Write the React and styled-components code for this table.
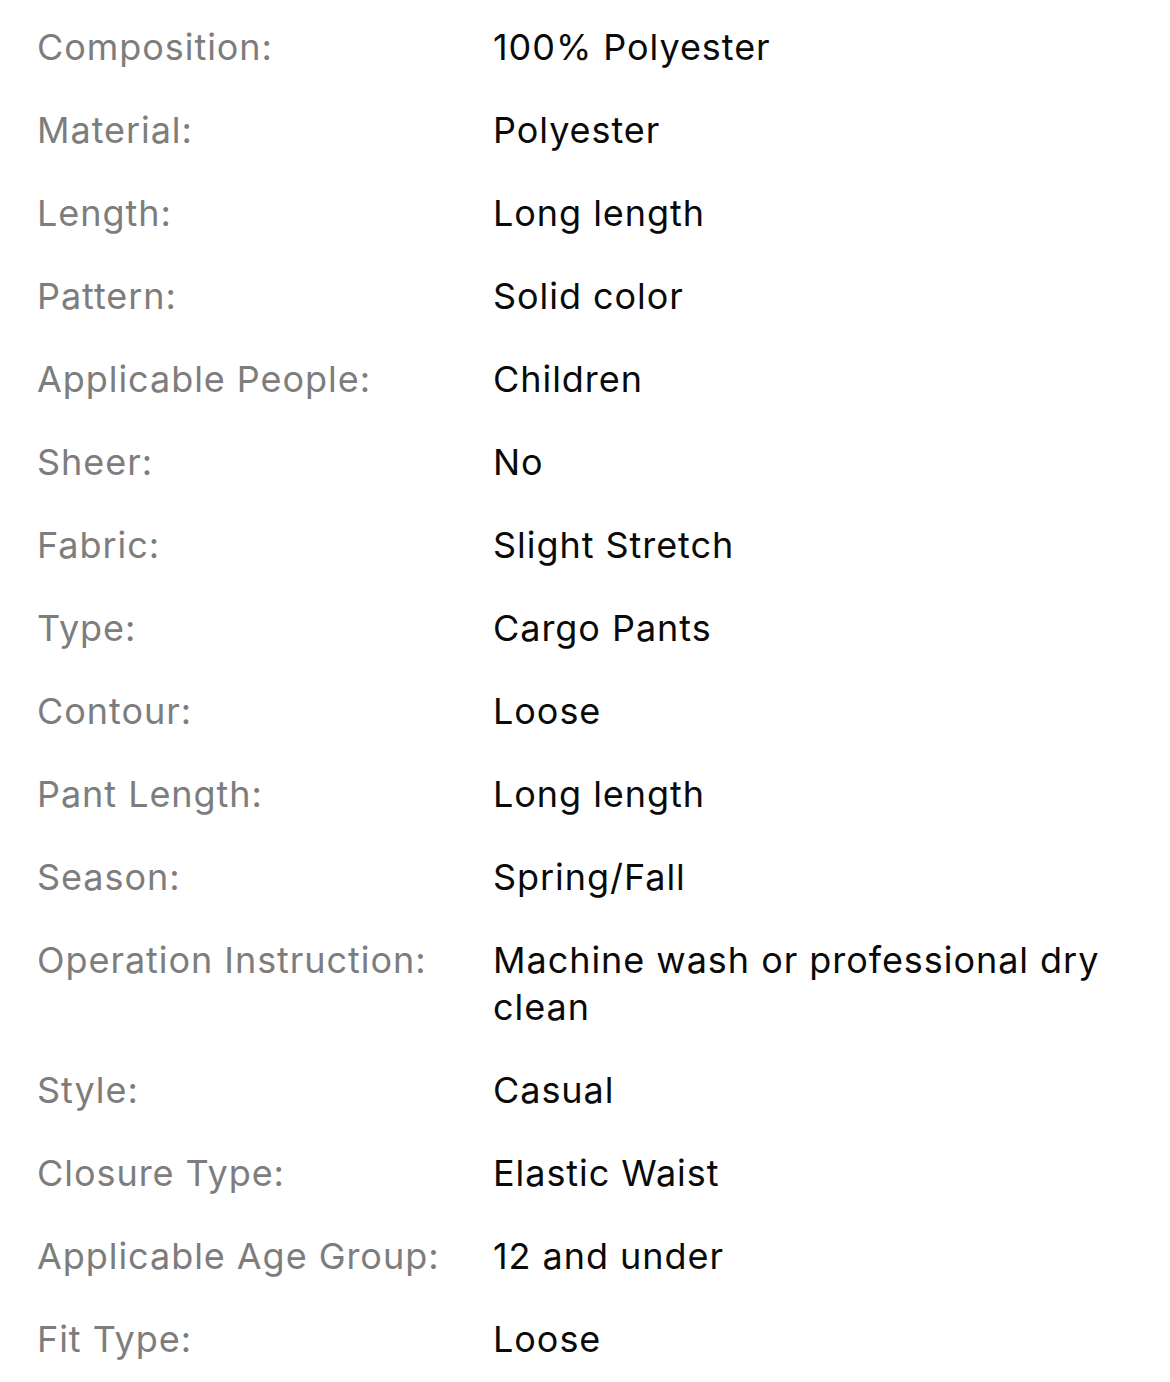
import React from "react";
import styled, { createGlobalStyle } from "styled-components";

const Global = createGlobalStyle`
  html, body { margin: 0; padding: 0; background: #fff; }
  body { font-family: Inter, "Noto Sans", "Liberation Sans", sans-serif; -webkit-font-smoothing: antialiased; }
`;

const Sheet = styled.div`
  padding: 24px 37px 20px 37px;
  display: grid;
  grid-template-columns: 456px 1fr;
  row-gap: 36px;
  font-size: 36px;
  line-height: 47px;
  letter-spacing: 0.95px;
`;

const Label = styled.div`
  color: #7d7d7d;
`;

const Value = styled.div`
  color: #0a0a0a;
  padding-right: 20px;
`;

const rows = [
  ["Composition:", "100% Polyester"],
  ["Material:", "Polyester"],
  ["Length:", "Long length"],
  ["Pattern:", "Solid color"],
  ["Applicable People:", "Children"],
  ["Sheer:", "No"],
  ["Fabric:", "Slight Stretch"],
  ["Type:", "Cargo Pants"],
  ["Contour:", "Loose"],
  ["Pant Length:", "Long length"],
  ["Season:", "Spring/Fall"],
  ["Operation Instruction:", "Machine wash or professional dry clean"],
  ["Style:", "Casual"],
  ["Closure Type:", "Elastic Waist"],
  ["Applicable Age Group:", "12 and under"],
  ["Fit Type:", "Loose"],
];

export default function App() {
  return (
    <>
      <Global />
      <Sheet>
        {rows.map(([k, v]) => (
          <React.Fragment key={k}>
            <Label>{k}</Label>
            <Value>{v}</Value>
          </React.Fragment>
        ))}
      </Sheet>
    </>
  );
}
